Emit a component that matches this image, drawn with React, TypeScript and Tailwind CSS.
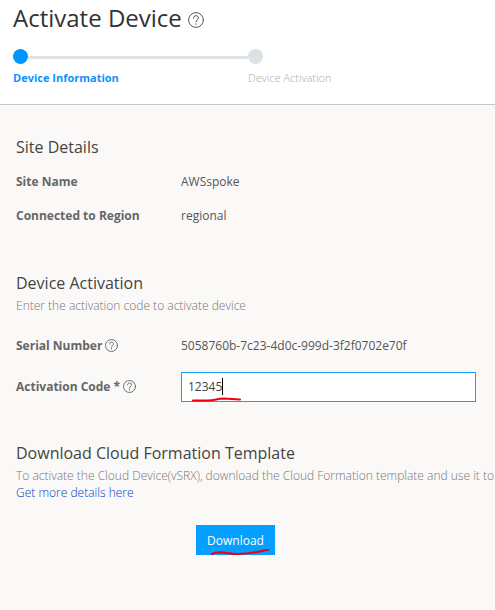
import type { ReactNode } from "react";

function HelpIcon({ className }: { className: string }) {
  return (
    <svg viewBox="0 0 16 16" className={className} fill="none" stroke="#555" strokeWidth="1" strokeLinecap="round">
      <circle cx="8" cy="8" r="7.4" />
      <path d="M5.6 6.1C5.6 4.6 6.6 3.7 8 3.7s2.4.9 2.4 2.2c0 1.9-2.4 2-2.4 4" />
      <path d="M8 11.8v.4" strokeWidth="1.2" />
    </svg>
  );
}

function Row({ label, help, children }: { label: string; help?: boolean; children: ReactNode }) {
  return (
    <div className="flex h-[34px] items-center">
      <div className="flex w-[165px] shrink-0 items-center gap-[3px] font-bold text-[#666]">
        <span className="-mt-[2px]">{label}</span>
        {help && <HelpIcon className="-mt-[2px] size-[13px]" />}
      </div>
      {children}
    </div>
  );
}

export default function App() {
  return (
    <div className="h-[610px] w-[495px] overflow-hidden whitespace-nowrap bg-[#faf9f7] font-['Open_Sans','Noto_Sans',sans-serif] text-[12px] leading-[17px] text-[#555]">
      <header className="h-[105px] border-b border-[#c6c8c8] bg-white pl-[13px]">
        <div className="flex h-[38px] items-center gap-[6px]">
          <h1 className="-mt-[2px] text-[24px] leading-[38px] text-[#333]">Activate Device</h1>
          <HelpIcon className="mt-[2px] size-4" />
        </div>
        <div className="mt-[11px] flex w-[250px] items-center">
          <span className="size-[15px] rounded-full bg-[#0096ff]" />
          <span className="mt-[2px] h-[3px] flex-1 bg-[#dde2e4]" />
          <span className="size-[15px] rounded-full bg-[#dbe1e4]" />
        </div>
        <div className="mt-[5px] flex text-[11px]">
          <span className="w-[235px] font-bold text-[#0b92ff]">Device Information</span>
          <span className="font-light text-[#aaa]">Device Activation</span>
        </div>
      </header>

      <main className="pl-4">
        <section className="pt-[31px]">
          <h2 className="text-[16px] leading-[22px] text-[#444]">Site Details</h2>
          <div className="mt-[7px]">
            <Row label="Site Name"><span className="-mt-[2px]">AWSspoke</span></Row>
            <Row label="Connected to Region"><span className="-mt-[2px]">regional</span></Row>
          </div>
        </section>

        <section className="pt-[39px]">
          <h2 className="text-[16px] leading-[22px] text-[#444]">Device Activation</h2>
          <p className="mt-[3px] font-light text-[#777]">Enter the activation code to activate device</p>
          <div className="mt-[15px]">
            <Row label="Serial Number" help><span className="-mt-[2px]">5058760b-7c23-4d0c-999d-3f2f0702e70f</span></Row>
            <div className="mt-[7px]">
              <Row label="Activation Code *" help>
                <div className="relative flex h-[30px] w-[295px] items-center border border-[#16a0f5] bg-white pl-[6px] text-[#444]">
                  <span className="-mt-[2px]">12345</span>
                  <span className="-mt-px h-[17px] w-px bg-black" />
                  <svg className="absolute left-[9px] top-[23px] h-[7px] w-[52px]" viewBox="0 0 52 7" fill="none" stroke="#f10012" strokeWidth="2" strokeLinecap="round">
                    <path d="M2 4.5h15c7 0 9-2 16-2l16 1" />
                  </svg>
                </div>
              </Row>
            </div>
          </div>
        </section>

        <section className="pt-[38px]">
          <h2 className="text-[16px] leading-[22px] text-[#444]">Download Cloud Formation Template</h2>
          <p className="mt-[3px] font-light text-[#777]">To activate the Cloud Device(vSRX), download the Cloud Formation template and use it to</p>
          <a className="block font-light text-[#0040cc]">Get more details here</a>
          <button className="relative ml-[180px] mt-6 block h-[30px] w-[79px] bg-[#05a0ff] text-white">
            Download
            <svg className="absolute left-[13px] top-[22px] h-[10px] w-[62px]" viewBox="0 0 62 10" fill="none" stroke="#f10012" strokeWidth="2.2" strokeLinecap="round">
              <path d="M3 7c7-4 16 0 25 0s14-1 20-2 6-2 11-2" />
            </svg>
          </button>
        </section>
      </main>
    </div>
  );
}
